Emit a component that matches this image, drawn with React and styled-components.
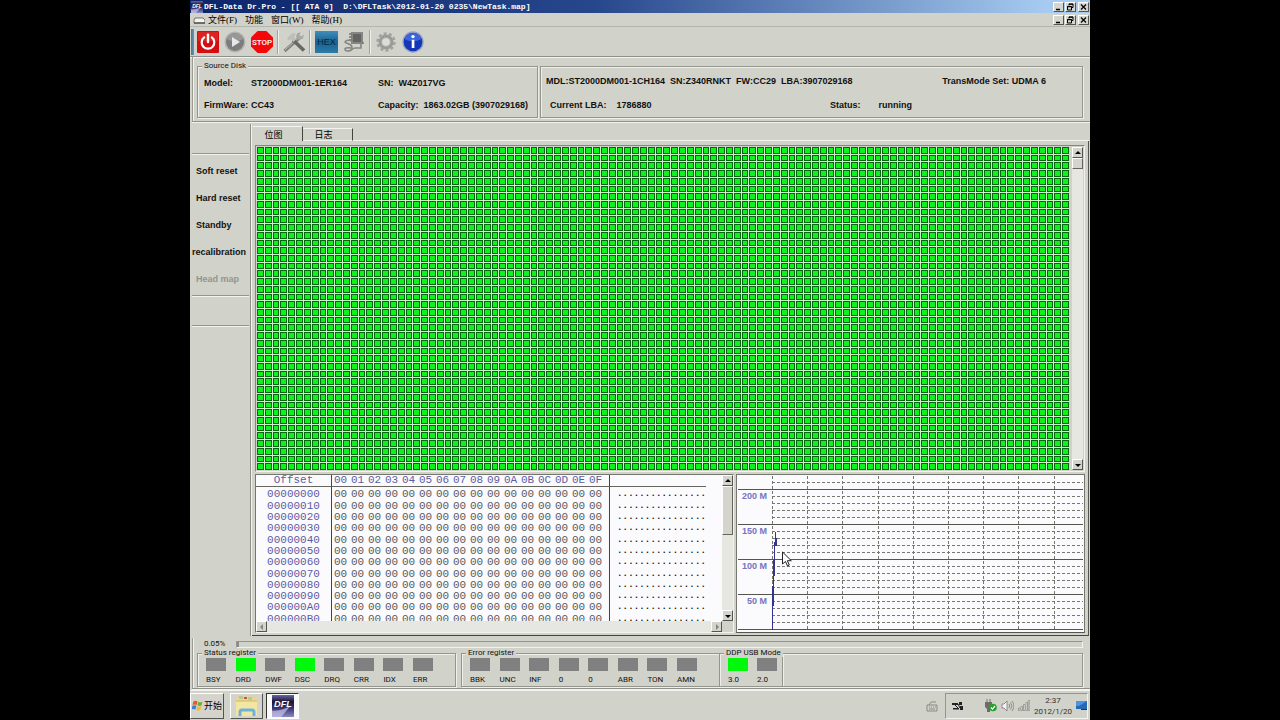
import { useState } from 'react'
import styled, { createGlobalStyle } from 'styled-components'

const COLS = 104
const ROWS = 42

const bytes = ['00', '01', '02', '03', '04', '05', '06', '07', '08', '09', '0A', '0B', '0C', '0D', '0E', '0F']
const offsets = ['00', '10', '20', '30', '40', '50', '60', '70', '80', '90', 'A0', 'B0'].map(o => '000000' + o)

const menus = ['文件(F)', '功能', '窗口(W)', '帮助(H)']

const sideItems = [
    { name: 'Soft reset' },
    { name: 'Hard reset' },
    { name: 'Standby' },
    { name: 'recalibration' },
    { name: 'Head map', disabled: true }
]

const statusRegs = [
    ['BSY', false], ['DRD', true], ['DWF', false], ['DSC', true],
    ['DRQ', false], ['CRR', false], ['IDX', false], ['ERR', false]
]
const errorRegs = [
    ['BBK', false], ['UNC', false], ['INF', false], ['0', false],
    ['0', false], ['ABR', false], ['TON', false], ['AMN', false]
]

const DflIcon = ({ size }) => (
    <svg width={size} height={size} viewBox="0 0 24 24">
        <defs>
            <linearGradient id="dfl" x1="0" y1="0" x2="0" y2="1">
                <stop offset="0" stopColor="#6a66a4" />
                <stop offset="0.3" stopColor="#191636" />
                <stop offset="0.6" stopColor="#3a3670" />
                <stop offset="1" stopColor="#8b88c6" />
            </linearGradient>
        </defs>
        <rect width="24" height="24" fill="url(#dfl)" />
        <path d="M0 24V17C8 18 14 15 20 12L10 24z" fill="#c9c8ea" opacity="0.7" />
        <text x="12" y="13" textAnchor="middle" fontFamily="Liberation Sans, sans-serif" fontSize="10" fontWeight="bold" fontStyle="italic" fill="#fff">DFL</text>
    </svg>
)

const PowerIcon = () => (
    <svg width="22" height="22" viewBox="0 0 22 22">
        <rect width="22" height="22" rx="1" fill="#d40d10" />
        <rect x="1" y="1" width="20" height="9" fill="#e23a34" opacity="0.5" />
        <path d="M7.2 6.4a6.3 6.3 0 1 0 7.6 0" fill="none" stroke="#fff" strokeWidth="2.2" strokeLinecap="round" />
        <path d="M11 3.6v7.4" stroke="#fff" strokeWidth="2.4" strokeLinecap="round" />
    </svg>
)

const PlayIcon = () => (
    <svg width="22" height="22" viewBox="0 0 22 22">
        <circle cx="11" cy="11" r="10.5" fill="#b4b4b2" />
        <circle cx="11" cy="11" r="9" fill="#7c7c7c" />
        <path d="M3 8a8.4 8.4 0 0 1 16 0c-5 3-11 3-16 0z" fill="#989898" />
        <path d="M8 6l8 5-8 5z" fill="#e6e6e6" />
    </svg>
)

const StopIcon = () => (
    <svg width="22" height="22" viewBox="0 0 22 22">
        <path d="M6.6 0h8.8L22 6.6v8.8L15.4 22H6.6L0 15.4V6.6z" fill="#f50808" />
        <text x="11" y="14" textAnchor="middle" fontFamily="Roboto, sans-serif" fontSize="8" fontWeight="500" fill="#fff">STOP</text>
    </svg>
)

const ToolsIcon = () => (
    <svg width="22" height="22" viewBox="0 0 22 22">
        <path d="M1.500 20L17 6.500" stroke="#82827f" strokeWidth="3.200" />
        <path d="M1.500 19.200L16 6.500" stroke="#b9b9b5" />
        <path d="M14 2.500l3.500-1.500-1 3 2 1.500 2.500-2-1 4-4 1.500-3-3z" fill="#a8a8a5" />
        <path d="M10 9l11 10.500" stroke="#686866" strokeWidth="3.600" />
        <path d="M4 7.500L9.500 2l3.500 1-2 2.500 2 3-2.500 2.500L8 8 5.500 9.500z" fill="#bdbdb9" />
    </svg>
)

const HexIcon = () => (
    <svg width="23" height="22" viewBox="0 0 23 22">
        <defs>
            <linearGradient id="hex" x1="0" y1="0" x2="0" y2="1">
                <stop offset="0" stopColor="#3f8fbc" />
                <stop offset="0.5" stopColor="#19618f" />
                <stop offset="1" stopColor="#2a7dab" />
            </linearGradient>
        </defs>
        <rect width="23" height="22" fill="url(#hex)" />
        <text x="11.5" y="14" textAnchor="middle" fontFamily="Liberation Sans, sans-serif" fontSize="9" fill="#072744">HEX</text>
    </svg>
)

const ChipIcon = () => (
    <svg width="22" height="22" viewBox="0 0 22 22">
        <rect x="8" y="1" width="12" height="12" fill="#858583" />
        <rect x="10" y="3" width="8" height="8" fill="#646462" />
        <path d="M6 3h3M6 6h3M6 9h3M19 12h2" stroke="#777775" strokeWidth="1.300" />
        <path d="M18 12v5h-6c-3 0-3 3-7 3-3 0-4-2-2-3 3-1 6 1 6-1 0-3-5-3-7-5 1-2 4-2 7-1" fill="none" stroke="#858583" strokeWidth="1.600" />
    </svg>
)

const GearIcon = () => (
    <svg width="22" height="22" viewBox="0 0 22 22">
        <circle cx="11" cy="11" r="8.500" fill="none" stroke="#a2a2a0" strokeWidth="2.400" strokeDasharray="3 2.340" />
        <circle cx="11" cy="11" r="6" fill="#c4c4c1" stroke="#9a9a98" strokeWidth="3" />
        <circle cx="11" cy="11" r="3.500" fill="#dcdcd8" />
    </svg>
)

const InfoIcon = () => (
    <svg width="22" height="22" viewBox="0 0 22 22">
        <circle cx="11" cy="11" r="10.700" fill="#98a0c4" />
        <circle cx="11" cy="11" r="9.300" fill="#1238b8" />
        <path d="M2.500 8a9 9 0 0 1 17 0c-5 3-12 3-17 0z" fill="#3b66da" />
        <circle cx="11" cy="5.600" r="1.700" fill="#fff" />
        <path d="M9.700 8.800h2.700v8.200h-2.700z" fill="#fff" />
    </svg>
)

const StartIcon = () => (
    <svg width="11" height="11" viewBox="0 0 12 12">
        <path d="M1.500 1.500Q3.500 .3 6 1.500L5 5.500Q3 4.300.6 5.500z" fill="#e8572a" />
        <path d="M6.800 1.800Q9 3 11.400 1.800L10.400 6Q8 7 5.900 5.800z" fill="#6fae35" />
        <path d="M.4 6.400Q2.600 5.300 4.800 6.400L3.800 10.400Q1.600 9.300-.4 10.400z" fill="#3b7fd4" />
        <path d="M5.700 6.800Q7.800 8 10.200 6.900L9.200 11Q7 12 4.700 10.800z" fill="#f2bd26" />
    </svg>
)

const FolderIcon = () => (
    <svg width="24" height="22" viewBox="0 0 24 22">
        <path d="M1 3h6l1-1.500h9L18 3h4v17H1z" fill="#ead98c" />
        <path d="M4 1h4v3H4zM13 2h4v3h-4z" fill="#b7c7a0" />
        <path d="M9 2h3v2H9z" fill="#c25a3a" />
        <path d="M1 6h21v15H1z" fill="#f3e6a2" />
        <path d="M1 6h21" stroke="#cdb966" />
        <path d="M5 21v-4a2 2 0 0 1 2-2h10a2 2 0 0 1 2 2v4" fill="none" stroke="#6cb2dd" strokeWidth="3" />
    </svg>
)

const Arrow = ({ dir }) => {
    const paths = { up: 'M1 5h6L4 2z', down: 'M1 3h6L4 6z', left: 'M5 1v6L2 4z', right: 'M3 1v6l3-3z' }
    return (
        <svg width="8" height="8" viewBox="0 0 8 8">
            <path d={paths[dir]} fill={dir === 'up' || dir === 'down' ? '#000' : '#85857e'} />
        </svg>
    )
}

const WindowButtons = ({ target }) => (
    <ButtonGroup>
        <WinBtn aria-label={`Minimize ${target}`}>
            <svg width="9" height="8" viewBox="0 0 9 8"><path d="M2 6.500h4" stroke="#000" strokeWidth="1.500" /></svg>
        </WinBtn>
        <WinBtn aria-label={`Restore ${target}`}>
            <svg width="9" height="8" viewBox="0 0 9 8"><path d="M3 2.500V1h4v3.500H6M3 1.200h4M1.500 3.500h4V7h-4zM1.500 3.700h4" fill="none" stroke="#000" /></svg>
        </WinBtn>
        <WinBtn aria-label={`Close ${target}`} $apart>
            <svg width="9" height="8" viewBox="0 0 9 8"><path d="M2 1.500l5 5M7 1.500l-5 5" stroke="#000" strokeWidth="1.200" /></svg>
        </WinBtn>
    </ButtonGroup>
)

const Registers = ({ items }) => (
    <RegList>
        {items.map(([name, on], i) => (
            <Reg key={i}>
                <Lamp $on={on} />
                <RegName>{name}</RegName>
            </Reg>
        ))}
    </RegList>
)

const HexView = () => (
    <HexPanel>
        <HexBody>
            <HexTable>
                <thead>
                    <tr>
                        <OffsetHead scope="col">Offset</OffsetHead>
                        {bytes.map(b => <ByteHead key={b} scope="col">{b}</ByteHead>)}
                        <GapHead />
                        <AsciiHead />
                    </tr>
                </thead>
                <tbody>
                    {offsets.map(o => (
                        <tr key={o}>
                            <OffsetCell scope="row">{o}</OffsetCell>
                            {bytes.map(b => <td key={b}>00</td>)}
                            <td />
                            <AsciiCell>
                                <Dots>{bytes.map(b => <span key={b}>.</span>)}</Dots>
                            </AsciiCell>
                        </tr>
                    ))}
                </tbody>
            </HexTable>
        </HexBody>
        <ScrollBar>
            <ScrollBtn aria-label="Hex up"><Arrow dir="up" /></ScrollBtn>
            <Thumb $size={49} />
            <Space />
            <ScrollBtn aria-label="Hex down"><Arrow dir="down" /></ScrollBtn>
        </ScrollBar>
        <ScrollBar $horizontal>
            <ScrollBtn aria-label="Hex left"><Arrow dir="left" /></ScrollBtn>
            <Space />
            <ScrollBtn aria-label="Hex right"><Arrow dir="right" /></ScrollBtn>
        </ScrollBar>
    </HexPanel>
)

const SpeedChart = () => {
    const lines = Array.from({ length: 22 }, (_, i) => 6 + i * 7)
    const verticals = Array.from({ length: 9 }, (_, i) => Math.round(34 + i * 35.2))
    return (
        <ChartPanel>
            <svg width="100%" height="100%" shapeRendering="crispEdges">
                {lines.map((y, i) => (i % 5 === 1
                    ? <line key={y} x1="0" x2="100%" y1={y + 0.5} y2={y + 0.5} stroke="#55554f" />
                    : <line key={y} x1="34" x2="100%" y1={y + 0.5} y2={y + 0.5} stroke="#77776f" strokeDasharray="3 2" />
                ))}
                {verticals.map(x => (
                    <line key={x} x1={x + 0.5} x2={x + 0.5} y1="0" y2="154" stroke="#77776f" strokeDasharray="3 2" />
                ))}
                <path d="M34.500 154V110M35.500 130V84M36.500 100V66M37.500 70V56M38.500 62V70" stroke="#34348e" fill="none" />
                {['200 M', '150 M', '100 M', '50 M'].map((t, i) => (
                    <AxisText key={t} x="29" y={23 + i * 35} textAnchor="end">{t}</AxisText>
                ))}
                <path d="M44.500 76v12l3-2.500 2 4.500 1.800-1-2-4.300h4z" fill="#fff" stroke="#222" strokeWidth="1" shapeRendering="auto" />
            </svg>
        </ChartPanel>
    )
}

const App = () => {

    const [tab, setTab] = useState('位图')

    return (
        <Window>
            <GlobalStyle />
            <TitleBar>
                <DflIcon size={12} />
                <Title>{'DFL-Data Dr.Pro - [[ ATA 0]  D:\\DFLTask\\2012-01-20 0235\\NewTask.map]'}</Title>
                <WindowButtons target="window" />
            </TitleBar>
            <MenuBar>
                <svg width="12" height="8" viewBox="0 0 12 8">
                    <path d="M2 2h8l2 2v3H1V4z" fill="#f4f4f0" stroke="#55554f" strokeWidth="0.800" />
                    <path d="M1 7h11" stroke="#33332f" />
                </svg>
                {menus.map(m => <MenuItem key={m}>{m}</MenuItem>)}
                <Space />
                <WindowButtons target="task" />
            </MenuBar>
            <ToolBar>
                <Grip />
                <ToolBtn aria-label="Power"><PowerIcon /></ToolBtn>
                <ToolBtn aria-label="Start"><PlayIcon /></ToolBtn>
                <ToolBtn aria-label="Stop"><StopIcon /></ToolBtn>
                <Divider />
                <ToolBtn aria-label="Tools"><ToolsIcon /></ToolBtn>
                <Divider />
                <ToolBtn aria-label="Hex"><HexIcon /></ToolBtn>
                <ToolBtn aria-label="Chip"><ChipIcon /></ToolBtn>
                <Divider />
                <ToolBtn aria-label="Settings"><GearIcon /></ToolBtn>
                <ToolBtn aria-label="About"><InfoIcon /></ToolBtn>
            </ToolBar>

            <InfoBar>
                <SourceBox>
                    <Legend>Source Disk</Legend>
                    <SourceGrid>
                        <Label>Model:</Label><Label>ST2000DM001-1ER164</Label>
                        <Pair $gap={5}><Label>SN:</Label><Label>W4Z017VG</Label></Pair>
                        <Label>FirmWare:</Label><Label>CC43</Label>
                        <Pair $gap={5}><Label>Capacity:</Label><Label>1863.02GB (3907029168)</Label></Pair>
                    </SourceGrid>
                </SourceBox>
                <TargetBox>
                    <TargetRow>
                        <Label>{'MDL:ST2000DM001-1CH164  SN:Z340RNKT  FW:CC29  LBA:3907029168'}</Label>
                        <TransMode>TransMode Set: UDMA 6</TransMode>
                    </TargetRow>
                    <TargetRow $indent>
                        <Lba $gap={10}><Label>Current LBA:</Label><Label>1786880</Label></Lba>
                        <State $gap={18}><Label>Status:</Label><Label>running</Label></State>
                    </TargetRow>
                </TargetBox>
            </InfoBar>

            <Body>
                <Side>
                    <SideGroup>
                        {sideItems.map(s => (
                            <SideBtn key={s.name} disabled={s.disabled}>{s.name}</SideBtn>
                        ))}
                    </SideGroup>
                    <SideEnd />
                </Side>
                <Main>
                    <Tabs role="tablist">
                        {['位图', '日志'].map(t => (
                            <Tab key={t} role="tab" aria-selected={tab === t} $active={tab === t} onClick={() => setTab(t)}>{t}</Tab>
                        ))}
                        <TabRest />
                    </Tabs>
                    <Content>
                        <MapPanel>
                            <SectorMap>
                                {Array.from({ length: COLS * ROWS }, (_, i) => <Sector key={i} />)}
                            </SectorMap>
                            <ScrollBar>
                                <ScrollBtn aria-label="Map up"><Arrow dir="up" /></ScrollBtn>
                                <Thumb $size={11} />
                                <Space />
                                <ScrollBtn aria-label="Map down"><Arrow dir="down" /></ScrollBtn>
                            </ScrollBar>
                        </MapPanel>
                        <Lower>
                            <HexView />
                            <SpeedChart />
                        </Lower>
                    </Content>
                </Main>
            </Body>

            <StatusArea>
                <ProgressRow>
                    <Percent>0.05%</Percent>
                    <Progress role="progressbar" aria-label="Progress" aria-valuenow={0.05}>
                        <Bar style={{ width: '0.2%' }} />
                    </Progress>
                </ProgressRow>
                <RegRow>
                    <StatusBox><Legend>Status register</Legend><Registers items={statusRegs} /></StatusBox>
                    <ErrorBox><Legend>Error register</Legend><Registers items={errorRegs} /></ErrorBox>
                    <UsbBox><Legend>DDP USB Mode</Legend><Registers items={[['3.0', true], ['2.0', false]]} /></UsbBox>
                    <RestBox />
                </RegRow>
            </StatusArea>

            <TaskBar>
                <StartBtn><StartIcon />开始</StartBtn>
                <TaskBtn aria-label="Explorer"><FolderIcon /></TaskBtn>
                <TaskBtn aria-label="DFL" $active><DflIcon size={22} /></TaskBtn>
                <Space />
                <svg width="12" height="12" viewBox="0 0 12 12">
                    <path d="M1 5h10v6H1zM3 5l2-3h5M3 7h1M5 7h1M7 7h1M9 7h1M3 9h6" fill="none" stroke="#8b8b85" />
                </svg>
                <Tray>
                    <svg width="13" height="10" viewBox="0 0 13 10">
                        <path d="M1 2h6v2H1zM2 7h6v1.500H2zM8 1h3v3H8zM9 5h3v4H9z" fill="#222" />
                        <path d="M4 4l3 3M7 3l2 4" stroke="#222" />
                    </svg>
                    <TrayGap />
                    <svg width="13" height="13" viewBox="0 0 13 13">
                        <path d="M3 0v3M6 0v3" stroke="#777" />
                        <path d="M1 3h7v5l-2 2v3H3v-3L1 8z" fill="#6c6c68" />
                        <circle cx="9" cy="8.500" r="3.800" fill="#23a32b" />
                        <path d="M7 8.500l1.500 1.600L11 7" fill="none" stroke="#fff" strokeWidth="1.200" />
                    </svg>
                    <svg width="13" height="12" viewBox="0 0 13 12">
                        <path d="M1 4h2l3-3v10L3 8H1z" fill="#f4f4f2" stroke="#777" strokeWidth="0.800" />
                        <path d="M8 4q1.500 2 0 4M9.500 2.500q3 3.500 0 7M11 1q4 5 0 10" fill="none" stroke="#85857f" strokeWidth="0.900" />
                    </svg>
                    <svg width="12" height="11" viewBox="0 0 12 11">
                        <path d="M.5 8h1.500v2.500H.5zM3 6.500h1.500v4H3zM5.500 4.500H7v6H5.500zM8 2.500h1.500v8H8zM10.300.5h1.400v10h-1.400z" fill="#efefec" stroke="#85857f" strokeWidth="0.700" />
                    </svg>
                    <Clock>
                        <span>2:37</span>
                        <span>2012/1/20</span>
                    </Clock>
                    <svg width="11" height="9" viewBox="0 0 11 9">
                        <rect width="11" height="8" fill="#2767b8" />
                        <path d="M0 0h11L3 5H0z" fill="#4d94dc" />
                        <path d="M5 8.500h6" stroke="#173a6c" />
                    </svg>
                </Tray>
            </TaskBar>
        </Window>
    )
}

const GlobalStyle = createGlobalStyle`
    * {
        box-sizing: border-box;
    }
    body {
        margin: 0;
        background: #000;
    }
    button {
        margin: 0;
        padding: 0;
        border: none;
        background: none;
        color: #000;
        font: inherit;
    }
    svg {
        display: block;
        flex: none;
    }
`
const Window = styled.div`
    display: flex;
    flex-direction: column;
    max-width: 900px;
    min-height: 100vh;
    margin: 0 auto;
    background: #d1d2c9;
    color: #111;
    font: 8px/10px Roboto, "Noto Sans CJK SC", sans-serif;
`
const Space = styled.div`
    flex: 1;
`
const TitleBar = styled.header`
    display: flex;
    align-items: center;
    gap: 1px;
    height: 13px;
    padding: 0 1px;
    background: linear-gradient(to right, #0c246a, #27478c 45%, #a6caf0 95%);
`
const Title = styled.h1`
    flex: 1;
    margin: 0;
    color: #fff;
    font: bold 8px/12px "Liberation Mono", monospace;
    white-space: pre;
`
const ButtonGroup = styled.div`
    display: flex;
    gap: 1px;
`
const WinBtn = styled.button`
    width: 11px;
    height: 10px;
    margin-left: ${p => (p.$apart ? '1px' : '0')};
    background: #d6d6ce;
    border: 1px solid;
    border-color: #fff #55554f #55554f #fff;
`
const MenuBar = styled.nav`
    display: flex;
    align-items: center;
    gap: 8px;
    height: 14px;
    padding: 0 1px 0 3px;
    border-bottom: 1px solid #b4b5ad;

    svg:first-child {
        margin-right: -5px;
    }
`
const MenuItem = styled.button`
    font: 9px/12px "Liberation Serif", "Noto Sans CJK SC", serif;
`
const ToolBar = styled.div`
    display: flex;
    align-items: center;
    gap: 5px;
    height: 30px;
    border-bottom: 1px solid #8f9089;
    box-shadow: 0 1px 0 #f2f2ee;
`
const Grip = styled.div`
    width: 3px;
    height: 26px;
    margin-left: 1px;
    margin-right: -2px;
    background: linear-gradient(to right, #4b7398, #6c93b4);
`
const ToolBtn = styled.button`
    display: flex;
`
const Divider = styled.div`
    width: 2px;
    height: 24px;
    margin: 0 -1px;
    border-left: 1px solid #a1a29a;
    border-right: 1px solid #f0f0ec;
`
const InfoBar = styled.section`
    display: flex;
    gap: 2px;
    margin-left: 2px;
    padding: 5px 7px 3px 4px;
    border-left: 1px solid #9a9b93;
    border-bottom: 1px solid #8f9089;
    box-shadow: 0 1px 0 #f2f2ee, inset 1px 0 0 #f2f2ee;
`
const Frame = styled.fieldset`
    min-width: 0;
    margin: 0;
    padding: 0;
    border: 1px solid #94958d;
    box-shadow: 1px 1px 0 #eeeeea, inset 1px 1px 0 #eeeeea;
`
const Legend = styled.legend`
    margin-left: 4px;
    padding: 0 2px;
    background: #d1d2c9;
    line-height: 8px;
    white-space: nowrap;
`
const SourceBox = styled(Frame)`
    flex: 0 0 341px;
`
const SourceGrid = styled.div`
    display: grid;
    grid-template-columns: 47px 127px auto;
    row-gap: 12px;
    padding: 8px 0 7px 6px;
    justify-content: start;
`
const TargetBox = styled.div`
    flex: 1;
    display: flex;
    flex-direction: column;
    gap: 14px;
    margin-top: 4px;
    padding: 9px 0 7px 5px;
    border: 1px solid #94958d;
    box-shadow: 1px 1px 0 #eeeeea, inset 1px 1px 0 #eeeeea;
`
const TargetRow = styled.div`
    display: flex;
    padding-left: ${p => (p.$indent ? '4px' : '0')};
`
const Label = styled.span`
    font: bold 9px/10px "Liberation Sans", Arial, sans-serif;
    white-space: pre;
`
const Pair = styled.div`
    display: flex;
    gap: ${p => p.$gap}px;
`
const TransMode = styled(Label)`
    margin-left: auto;
    margin-right: 36px;
`
const Lba = styled(Pair)`
    flex: 0 0 280px;
`
const State = styled(Pair)`
    flex: 1;
`
const Body = styled.div`
    flex: 1;
    display: flex;
    margin-top: 2px;
`
const Side = styled.aside`
    flex: 0 0 61px;
    padding: 29px 1px 0 2px;
    border-right: 1px solid #8f9089;
`
const SideGroup = styled.div`
    display: flex;
    flex-direction: column;
    padding: 3px 0;
    border: solid #94958d;
    border-width: 1px 0;
    box-shadow: 0 1px 0 #f2f2ee, inset 0 1px 0 #f2f2ee;
`
const SideBtn = styled.button`
    height: 27px;
    padding-left: 4px;
    font: bold 9px/12px "Liberation Sans", Arial, sans-serif;
    text-align: left;
    color: ${p => (p.disabled ? '#94958f' : '#111')};

    &:nth-child(4) {
        padding-left: 0;
    }
`
const SideEnd = styled.div`
    height: 30px;
    border-bottom: 1px solid #94958d;
    box-shadow: 0 1px 0 #f2f2ee;
`
const Main = styled.main`
    flex: 1;
    min-width: 0;
    display: flex;
    flex-direction: column;
    padding: 2px 1px 0 0;
    border-left: 1px solid #f2f2ee;
`
const Tabs = styled.div`
    display: flex;
    align-items: flex-end;
    height: 15px;
    padding-left: 1px;
`
const Tab = styled.button`
    width: 50px;
    height: ${p => (p.$active ? '15px' : '13px')};
    padding-right: 8px;
    border: solid #f2f2ee;
    border-width: 1px 0 ${p => (p.$active ? '0' : '1px')} 0;
    border-right: 1px solid #44443f;
    font: 9px/11px "Noto Sans CJK SC", sans-serif;
`
const TabRest = styled.div`
    flex: 1;
    border-bottom: 1px solid #f2f2ee;
`
const Content = styled.div`
    flex: 1;
    display: flex;
    flex-direction: column;
    gap: 2px;
    padding: 4px 3px 2px 3px;
    border-right: 1px solid #55554f;
    border-bottom: 1px solid #44443f;
`
const MapPanel = styled.div`
    flex: 1;
    display: flex;
    gap: 3px;
    padding: 1px;
    border: 1px solid;
    border-color: #85867e #f2f2ee #f2f2ee #85867e;
`
const SectorMap = styled.div`
    flex: 1;
    display: grid;
    grid-template-columns: repeat(${COLS}, minmax(0, 1fr));
    grid-template-rows: repeat(${ROWS}, minmax(5px, 1fr));
    gap: 1px;
    background: #d4ecd0;
`
const Sector = styled.div`
    background: #0cf21a;
    border: 1px solid #0a6414;
`
const ScrollBar = styled.div`
    display: flex;
    flex-direction: ${p => (p.$horizontal ? 'row' : 'column')};
    grid-column: ${p => (p.$horizontal ? '1' : 'auto')};
    ${p => (p.$horizontal ? 'height' : 'width')}: 11px;
    background: #e7e7e2;
`
const ScrollBtn = styled.button`
    display: flex;
    align-items: center;
    justify-content: center;
    width: 11px;
    height: 11px;
    background: #d4d4cc;
    border: 1px solid;
    border-color: #fff #55554f #55554f #fff;
`
const Thumb = styled.div`
    height: ${p => p.$size}px;
    background: #d4d4cc;
    border: 1px solid;
    border-color: #fff #66665f #66665f #fff;
`
const Lower = styled.div`
    display: flex;
    gap: 2px;
    height: 159px;
`
const HexPanel = styled.div`
    flex: 0 0 479px;
    display: grid;
    grid-template-columns: 1fr 11px;
    grid-template-rows: 1fr 11px;
    border: 1px solid;
    border-color: #75766e #f2f2ee #f2f2ee #75766e;
`
const HexBody = styled.div`
    overflow: hidden;
    min-height: 0;
    background: #fbfbfd;
`
const HexTable = styled.table`
    height: 150px;
    border-collapse: separate;
    border-spacing: 0;
    table-layout: fixed;
    width: 450px;
    font: 11px/11px "Liberation Mono", "Courier New", monospace;
    color: #5a5a5a;

    th, td {
        padding: 0;
        text-align: center;
        font-weight: normal;
    }
    tbody tr:first-child > * {
        padding-top: 2px;
    }
`
const HeadCell = styled.th`
    height: 12px;
    border-bottom: 1px solid #66665f;
    color: #5c5ca4;
`
const OffsetHead = styled(HeadCell)`
    width: 76px;
    border-right: 1px solid #44443f;
`
const ByteHead = styled(HeadCell)`
    width: 17px;
`
const GapHead = styled.td`
    width: 5px;
    border-bottom: 1px solid #66665f;
`
const AsciiHead = styled.td`
    border-left: 1px solid #44443f;
    border-bottom: 1px solid #66665f;
`
const OffsetCell = styled.th`
    border-right: 1px solid #44443f;
    color: #5c5ca4;
`
const AsciiCell = styled.td`
    border-left: 1px solid #44443f;
`
const Dots = styled.div`
    display: flex;
    justify-content: space-between;
    margin-left: 7px;
    font-size: 9px;
    font-weight: bold;
    color: #111;
`
const ChartPanel = styled.div`
    flex: 1;
    min-width: 0;
    padding: 1px;
    background: #fbfbfd;
    border: 1px solid;
    border-color: #75766e #75766e #55554f #75766e;
`
const AxisText = styled.text`
    fill: #7474c0;
    font: bold 9px "Liberation Sans", Arial, sans-serif;
`
const StatusArea = styled.section`
    margin: 2px 0 0 2px;
    padding: 1px 7px 1px 4px;
    border-left: 1px solid #9a9b93;
    border-bottom: 1px solid #8f9089;
    box-shadow: 0 1px 0 #f2f2ee, inset 1px 0 0 #f2f2ee;
`
const ProgressRow = styled.div`
    display: flex;
    align-items: center;
    height: 10px;
    padding-left: 7px;
`
const Percent = styled.span`
    width: 32px;
`
const Progress = styled.div`
    flex: 1;
    height: 7px;
    border: 1px solid;
    border-color: #94958d #f2f2ee #f2f2ee #94958d;
`
const Bar = styled.div`
    height: 5px;
    background: #8b8c86;
`
const RegRow = styled.div`
    display: flex;
    align-items: stretch;
`
const StatusBox = styled(Frame)`
    flex: 0 0 259px;
    margin-right: 5px;
`
const ErrorBox = styled(Frame)`
    flex: 0 0 258px;
    border-right: none;
`
const UsbBox = styled(Frame)`
    flex: 0 0 64px;
`
const RestBox = styled.div`
    flex: 1;
    margin-top: 4px;
    border: 1px solid #94958d;
    border-left: none;
    box-shadow: 1px 1px 0 #eeeeea, inset 0 1px 0 #eeeeea;
`
const RegList = styled.div`
    display: flex;
    justify-content: space-between;
    max-width: 227px;
    margin: 0 5px 0 8px;
    padding: 1px 0;
`
const Reg = styled.div`
    width: 20px;
    flex: none;
`
const Lamp = styled.div`
    height: 13px;
    margin-bottom: 4px;
    background: ${p => (p.$on ? '#00f80a' : '#808080')};
`
const RegName = styled.div`
    white-space: nowrap;
`
const TaskBar = styled.footer`
    display: flex;
    align-items: center;
    gap: 3px;
    height: 30px;
    margin-top: 1px;
    padding-right: 2px;
    border-top: 1px solid #f2f2ee;
`
const TaskBtn = styled.button`
    display: flex;
    align-items: center;
    justify-content: center;
    width: 33px;
    height: 26px;
    background: ${p => (p.$active ? '#fafafa' : '#d4d4cc')};
    border: 1px solid;
    border-color: ${p => (p.$active ? '#33332f #fff #fff #33332f' : '#fff #55554f #55554f #fff')};
`
const StartBtn = styled(TaskBtn)`
    gap: 1px;
    width: 34px;
    margin-right: 3px;
    font: 9px/12px "Noto Sans CJK SC", sans-serif;
`
const Tray = styled.div`
    display: flex;
    align-items: center;
    gap: 4px;
    height: 26px;
    margin-left: 4px;
    padding-left: 5px;
    border: 1px solid;
    border-color: #94958d #f2f2ee #f2f2ee #94958d;
`
const TrayGap = styled.div`
    width: 12px;
`
const Clock = styled.div`
    display: flex;
    flex-direction: column;
    align-items: center;
    font: 8px/11px Roboto, sans-serif;
    color: #33332f;
`

export default App
